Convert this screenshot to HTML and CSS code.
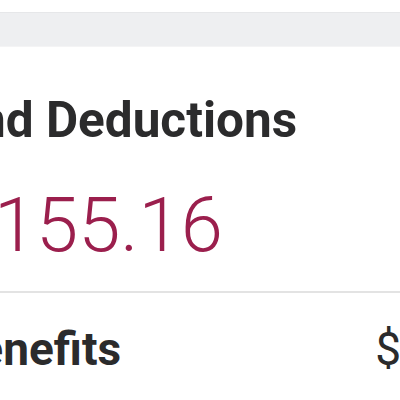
FILE: index.html
```html
<!DOCTYPE html>
<html>
<head>
<meta charset="utf-8">
<link rel="stylesheet" href="styles.css">
</head>
<body>
<div class="page">
  <div class="topbar"></div>
  <section class="summary">
    <h1 class="heading">Benefits and Deductions</h1>
    <div class="amount">$1,155.16</div>
  </section>
  <div class="divider"></div>
  <div class="row">
    <span class="row-label">Benefits</span>
    <span class="row-value">$</span>
  </div>
</div>
</body>
</html>
```
FILE: styles.css
```css
html, body {
  margin: 0;
  padding: 0;
  background: #ffffff;
  overflow: hidden;
}
.page {
  width: 400px;
  height: 400px;
  overflow: hidden;
  font-family: Roboto, "Liberation Sans", sans-serif;
}
.topbar {
  margin-top: 12px;
  height: 35px;
  background: #eeeff1;
  border-top: 1px solid #e6e7e9;
  border-bottom: 1px solid #f4f4f5;
  box-sizing: border-box;
}
.summary {
  display: flex;
  flex-direction: column;
}
.heading {
  margin: 48px 0 0 -246px;
  font-size: 49.5px;
  line-height: 50px;
  font-weight: 700;
  color: #2b2b2c;
  white-space: nowrap;
}
.amount {
  margin: 42px 0 0 -105px;
  font-size: 76px;
  line-height: 77px;
  font-weight: 300;
  color: #9b1f4d;
  white-space: nowrap;
}
.divider {
  margin-top: 27px;
  height: 2px;
  background: #e3e3e3;
}
.row {
  display: flex;
  justify-content: space-between;
  align-items: baseline;
  margin-top: 33px;
  height: 46px;
  line-height: 46px;
  white-space: nowrap;
}
.row-label {
  margin-left: -51px;
  font-size: 46px;
  font-weight: 700;
  color: #2b2b2c;
}
.row-value {
  margin-right: -1px;
  font-size: 46px;
  font-weight: 400;
  color: #2b2b2c;
}
```
